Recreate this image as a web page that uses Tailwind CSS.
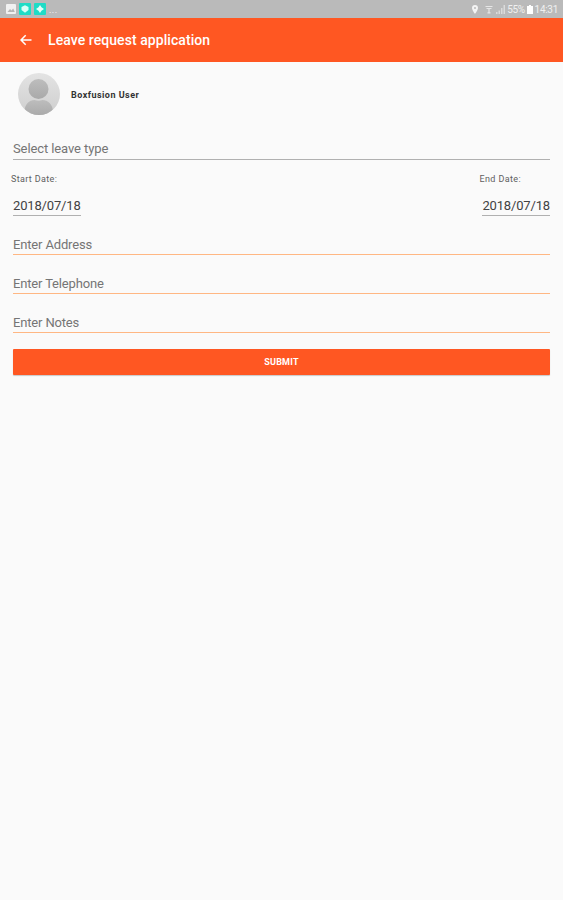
<!DOCTYPE html>
<html lang="en">
<head>
    <meta charset="UTF-8">
    <meta name="viewport" content="width=device-width, initial-scale=1.0">
    <title>Leave request application</title>
    <script src="https://cdn.jsdelivr.net/npm/@tailwindcss/browser@4"></script>
</head>
<body class="bg-[#fafafa] min-h-screen font-[Roboto,sans-serif] text-[13px] tracking-[-0.16px] text-[#757575]">
    <!-- Status bar -->
    <div class="h-[18px] bg-[#bababa] flex items-center justify-between pl-1.5 pr-[5px] text-white">
        <div class="flex items-center gap-[3px]">
            <svg class="w-[10px] h-[10px]" viewBox="0 0 10 10"><rect width="10" height="10" rx="1" fill="#f1f1f1"/><path d="M1.5 8 4 5l1.5 1.500L7.200 4.500 8.800 8z" fill="#b5b5b5"/></svg>
            <svg class="w-[12px] h-[12px]" viewBox="0 0 12 12"><rect width="12" height="12" rx="1" fill="#1fdcc6"/><path d="M6 2.200 9.500 4v3L6 9.800 2.500 7V4z" fill="#d9fff7"/></svg>
            <svg class="w-[12px] h-[12px]" viewBox="0 0 12 12"><rect width="12" height="12" rx="1" fill="#1fdcc6"/><path d="M6 2l1.500 2.200L10 6 7.500 7.800 6 10 4.500 7.800 2 6l2.500-1.800z" fill="#e4fff9"/></svg>
            <span class="pt-[3px] text-[9px] leading-none tracking-[0.5px]">...</span>
        </div>
        <div class="flex items-center text-[10px] leading-none text-[#f0f0f0]">
            <svg class="w-[6px] h-[9px] mr-[7px]" viewBox="0 0 6 9"><path fill="#f4f4f4" fill-rule="evenodd" d="M3 0a3 3 0 0 0-3 3c0 2 3 6 3 6s3-4 3-6a3 3 0 0 0-3-3zm0 2a1 1 0 1 1 0 2 1 1 0 0 1 0-2z"/></svg>
            <svg class="w-[8px] h-[9px] mr-[3px]" viewBox="0 0 8 9" fill="none" stroke="#e6e6e6" stroke-width="1.200"><path d="M.5 1.500h7M1.500 3.500h5M4 4v4M2.500 7.800h3"/></svg>
            <svg class="w-[9px] h-[9px] mr-[2px]" viewBox="0 0 9 9" fill="#e6e6e6"><path d="M0 7h1.500v2H0zM2.500 5.500H4V9H2.500zM5 3h1.500v6H5zM7.500 0H9v9H7.500z" opacity=".75"/></svg>
            <span class="pt-px tracking-[-0.4px]">55%</span>
            <svg class="w-[6px] h-[9px] ml-[2px] mr-[2px]" viewBox="0 0 6 9"><path d="M2 0h2v1h2v8H0V1h2z" fill="#fff"/></svg>
            <span class="pt-px tracking-[-0.3px]">14:31</span>
        </div>
    </div>

    <header class="h-[44px] bg-[#ff5722] flex items-center pl-5 text-white">
        <svg class="w-[12px] h-[12px] mr-4" viewBox="0 0 12 12" fill="none" stroke="#fff" stroke-width="1.500"><path d="M11.500 6H1.200M5.700 1.200 1 6l4.700 4.800"/></svg>
        <h1 class="text-[14px] font-medium leading-none tracking-[0.07px]">Leave request application</h1>
    </header>

    <main class="px-[13px] pt-[11px]">
        <div class="flex items-center pl-[5px] gap-[11px]">
            <svg class="w-[42px] h-[42px]" viewBox="0 0 42 42">
                <defs>
                    <linearGradient id="back" x2="0" y2="1"><stop stop-color="#e3e3e3"/><stop offset="1" stop-color="#cecece"/></linearGradient>
                    <linearGradient id="person" x2="0" y2="1"><stop stop-color="#bdbdbd"/><stop offset="1" stop-color="#a9a9a9"/></linearGradient>
                    <clipPath id="round"><circle cx="21" cy="21" r="21"/></clipPath>
                </defs>
                <g clip-path="url(#round)">
                    <rect width="42" height="42" fill="url(#back)"/>
                    <circle cx="20.500" cy="16" r="10" fill="url(#person)"/>
                    <path d="M6.500 39c0-8 5-12 10-12 2.500 1 5.500 1 8 0 5 0 10.500 4 10.500 12v4H6.500z" fill="url(#person)"/>
                </g>
            </svg>
            <span class="pt-[3px] text-[9px] font-bold text-[#333] tracking-[0.47px]">Boxfusion User</span>
        </div>

        <form>
            <div class="mt-[25px] h-[20px] border-b border-[#b0b0b0] leading-[18px] tracking-[-0.1px]">Select leave type</div>

            <div class="flex justify-between mt-[14px]">
                <div>
                    <div class="-ml-[2px] text-[9px] leading-[11px] tracking-[0.35px] text-[#606060]">Start Date:</div>
                    <div class="mt-[12px] h-[19px] border-b border-[#b0b0b0] leading-[18px] text-[#424242]">2018/07/18</div>
                </div>
                <div>
                    <div class="-ml-[3px] text-[9px] leading-[11px] tracking-[0.4px] text-[#606060]">End Date:</div>
                    <div class="mt-[12px] h-[19px] border-b border-[#b0b0b0] leading-[18px] text-[#424242]">2018/07/18</div>
                </div>
            </div>

            <div class="mt-[19px] h-[20px] border-b border-[#ffb783] leading-[19px]">Enter Address</div>
            <div class="mt-[19px] h-[20px] border-b border-[#ffb783] leading-[19px]">Enter Telephone</div>
            <div class="mt-[19px] h-[20px] border-b border-[#ffb783] leading-[19px]">Enter Notes</div>

            <button type="button" class="block w-full mt-[16px] h-[26px] pt-px rounded-[1px] bg-[#ff5722] text-white text-[9px] font-bold tracking-[0.2px] shadow-[0_1px_1px_rgba(0,0,0,0.2)]">SUBMIT</button>
        </form>
    </main>
</body>
</html>
